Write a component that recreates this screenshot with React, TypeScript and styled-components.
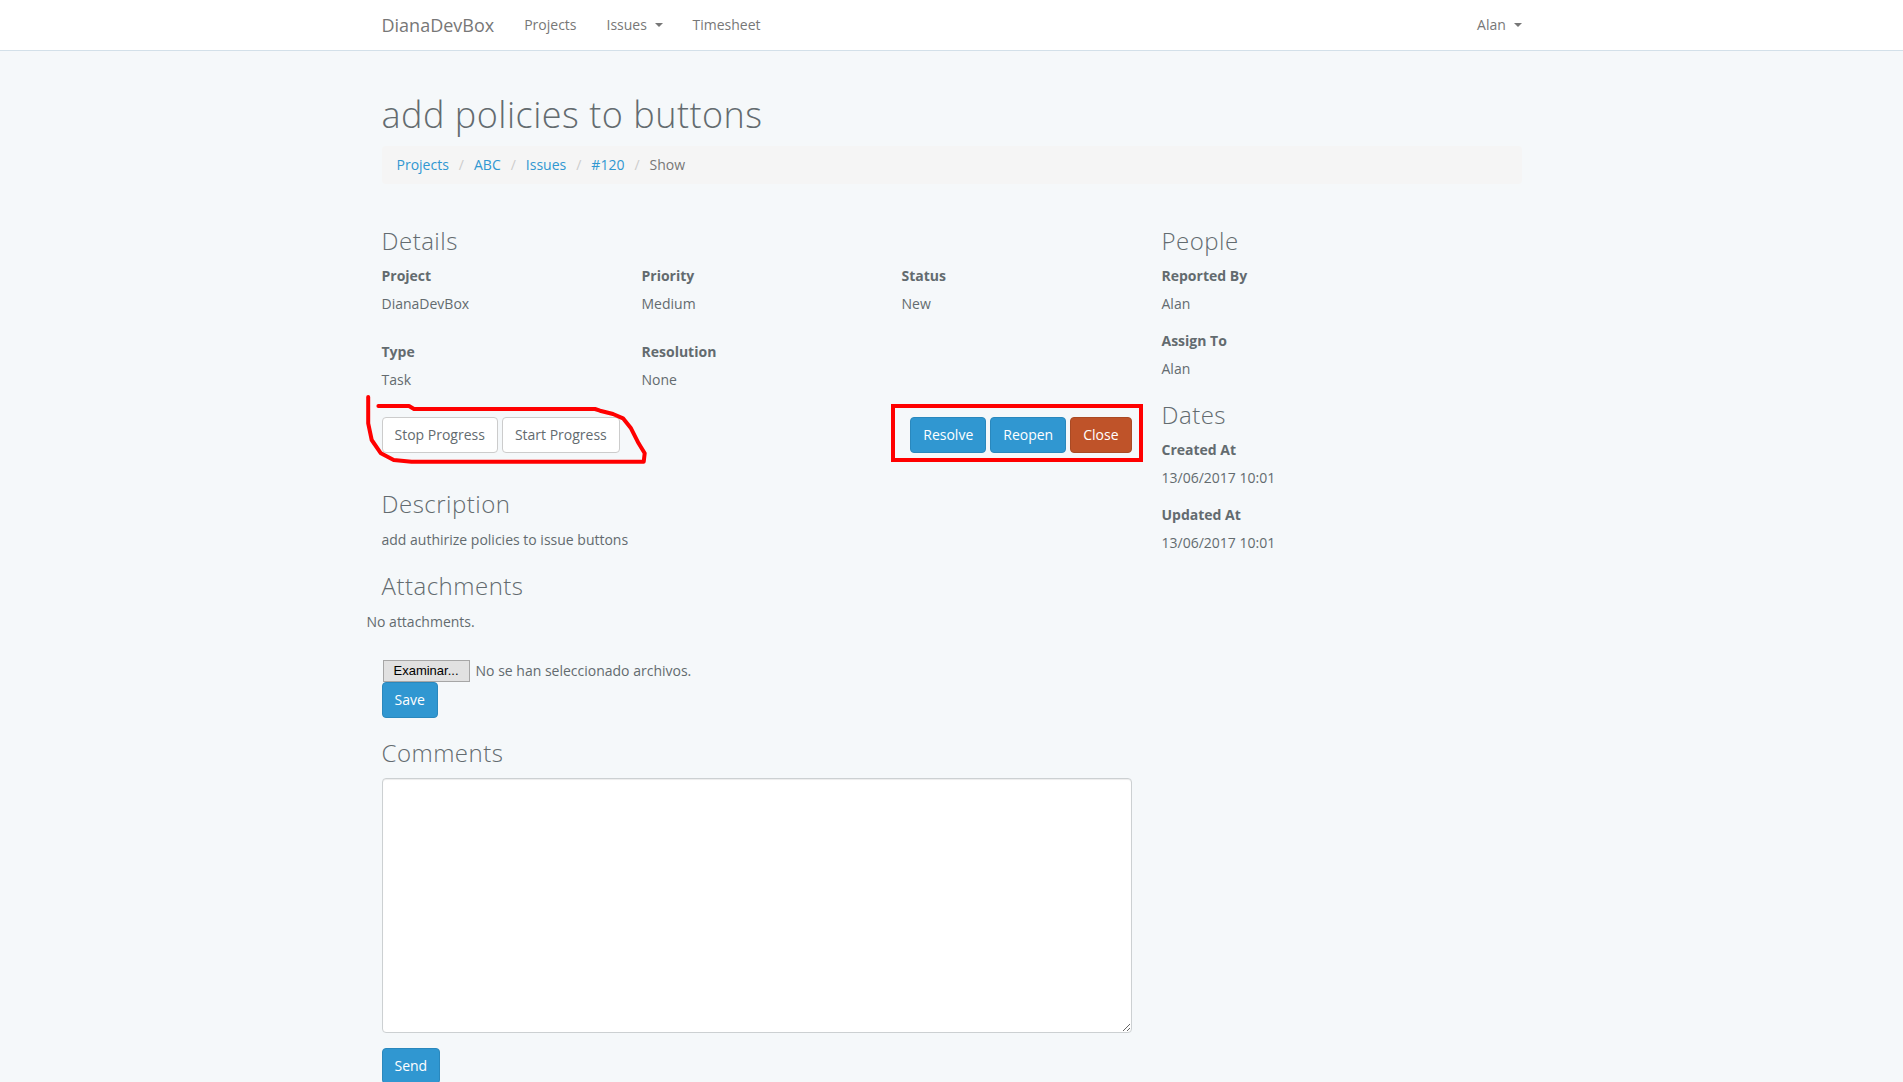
import styled, { createGlobalStyle } from 'styled-components'

const GlobalStyle = createGlobalStyle`
  body {
    margin: 0;
    background-color: #f5f8fa;
    color: #636b6f;
    font-family: 'Open Sans', 'Liberation Sans', sans-serif;
    font-size: 14px;
    line-height: 1.6;
  }
  * {
    box-sizing: border-box;
  }
`

const details = [
  { label: 'Project', value: 'DianaDevBox' },
  { label: 'Priority', value: 'Medium' },
  { label: 'Status', value: 'New' },
  { label: 'Type', value: 'Task' },
  { label: 'Resolution', value: 'None' },
]

const people = [
  { label: 'Reported By', value: 'Alan' },
  { label: 'Assign To', value: 'Alan' },
]

const dates = [
  { label: 'Created At', value: '13/06/2017 10:01' },
  { label: 'Updated At', value: '13/06/2017 10:01' },
]

const crumbs = ['Projects', 'ABC', 'Issues', '#120']

const App = () => {
  return (
    <>
      <GlobalStyle />
      <Navbar>
        <NavInner>
          <Brand>DianaDevBox</Brand>
          <NavLink>Projects</NavLink>
          <NavLink>
            Issues <Caret />
          </NavLink>
          <NavLink>Timesheet</NavLink>
          <NavSpacer />
          <NavLink $last>
            Alan <Caret />
          </NavLink>
        </NavInner>
      </Navbar>

      <Container>
        <Title>add policies to buttons</Title>
        <Breadcrumb>
          {crumbs.map((crumb) => (
            <Crumb key={crumb}>
              <CrumbLink>{crumb}</CrumbLink>
              <CrumbSep>/</CrumbSep>
            </Crumb>
          ))}
          <Crumb>
            <CrumbActive>Show</CrumbActive>
          </Crumb>
        </Breadcrumb>

        <Columns>
          <MainColumn>
            <SectionTitle>Details</SectionTitle>
            <FieldGrid>
              {details.map((item) => (
                <div key={item.label}>
                  <FieldLabel>{item.label}</FieldLabel>
                  <FieldValue $gap={26}>{item.value}</FieldValue>
                </div>
              ))}
            </FieldGrid>

            <Actions>
              <ButtonGroup>
                <Button $variant='default'>Stop Progress</Button>
                <Button $variant='default'>Start Progress</Button>
              </ButtonGroup>
              <ButtonGroup>
                <Button $variant='primary'>Resolve</Button>
                <Button $variant='primary'>Reopen</Button>
                <Button $variant='danger'>Close</Button>
              </ButtonGroup>

              <Scribble width='300' height='80' viewBox='0 0 300 80'>
                <path
                  d='M16.4 14 L47 14 L52 17 L233 17 L238 18.7 L251 22 L261 26.3 L269 36.3 L276.6 51.3 L282.7 61.3 L281.7 69.7 L49.5 69.7 L31.7 68 L18.9 61.3 L9.7 48 L6.2 31.3 L6.2 5'
                  fill='none'
                  stroke='#ff0000'
                  strokeWidth='4'
                  strokeLinecap='round'
                  strokeLinejoin='round'
                />
              </Scribble>
              <RedBox />
            </Actions>

            <SectionTitle>Description</SectionTitle>
            <Paragraph>add authirize policies to issue buttons</Paragraph>

            <SectionTitle>Attachments</SectionTitle>
            <NoAttachments>No attachments.</NoAttachments>

            <FileRow>
              <FileButton>Examinar...</FileButton>
              <FileText>No se han seleccionado archivos.</FileText>
            </FileRow>
            <Button $variant='primary'>Save</Button>

            <SectionTitle>Comments</SectionTitle>
            <CommentBox />
            <Button $variant='primary'>Send</Button>
          </MainColumn>

          <SideColumn>
            <SectionTitle>People</SectionTitle>
            {people.map((item) => (
              <div key={item.label}>
                <FieldLabel>{item.label}</FieldLabel>
                <FieldValue $gap={15}>{item.value}</FieldValue>
              </div>
            ))}
            <SectionTitle>Dates</SectionTitle>
            {dates.map((item) => (
              <div key={item.label}>
                <FieldLabel>{item.label}</FieldLabel>
                <FieldValue $gap={15}>{item.value}</FieldValue>
              </div>
            ))}
          </SideColumn>
        </Columns>
      </Container>
    </>
  )
}

const Navbar = styled.nav`
  background-color: #fff;
  border-bottom: 1px solid #d3e0e9;
  margin-bottom: 22px;
`

const NavInner = styled.div`
  display: flex;
  align-items: center;
  width: 1140px;
  height: 50px;
  margin: 0 auto;
`

const Brand = styled.a`
  font-size: 18px;
  line-height: 20px;
  color: #777;
  padding: 15px 15px 15px 0;
`

const NavLink = styled.a<{ $last?: boolean }>`
  display: flex;
  align-items: center;
  font-size: 14px;
  line-height: 20px;
  color: #777;
  padding: ${({ $last }) => ($last ? '15px 0 15px 15px' : '15px')};
  white-space: pre;
`

const Caret = styled.span`
  display: inline-block;
  width: 0;
  height: 0;
  margin-left: 4px;
  border-top: 4px solid #777;
  border-left: 4px solid transparent;
  border-right: 4px solid transparent;
`

const NavSpacer = styled.div`
  flex: 1;
`

const Container = styled.div`
  display: flow-root;
  width: 1140px;
  margin: 0 auto;
`

const Title = styled.h1`
  font-size: 36px;
  font-weight: 300;
  letter-spacing: 0.5px;
  line-height: 1.1;
  margin: 22px 0 11px;
  color: #636b6f;
`

const Breadcrumb = styled.ol`
  display: flex;
  list-style: none;
  margin: 0 0 22px;
  padding: 8px 15px;
  background-color: #f5f5f5;
  border-radius: 4px;
`

const Crumb = styled.li`
  display: flex;
`

const CrumbLink = styled.a`
  color: #3097d1;
`

const CrumbSep = styled.span`
  color: #ccc;
  padding: 0 10px;
`

const CrumbActive = styled.span`
  color: #777;
`

const Columns = styled.div`
  display: grid;
  grid-template-columns: 750px 360px;
  column-gap: 30px;
`

const MainColumn = styled.div``

const SideColumn = styled.div``

const SectionTitle = styled.h3`
  font-size: 24px;
  font-weight: 300;
  letter-spacing: 0.5px;
  line-height: 1.1;
  margin: 22px 0 11px;
`

const FieldGrid = styled.div`
  display: grid;
  grid-template-columns: repeat(3, 1fr);
  column-gap: 30px;
`

const FieldLabel = styled.label`
  display: block;
  font-weight: 700;
  margin-bottom: 5px;
`

const FieldValue = styled.p<{ $gap: number }>`
  margin: 0 0 ${({ $gap }) => $gap}px;
`

const Actions = styled.div`
  position: relative;
  display: flex;
  justify-content: space-between;
  margin-bottom: 38px;
`

const ButtonGroup = styled.div`
  display: flex;
  gap: 4px;
`

const variants = {
  default: { bg: '#fff', border: '#ccc', color: '#636b6f' },
  primary: { bg: '#3097d1', border: '#2a88bd', color: '#fff' },
  danger: { bg: '#bf5329', border: '#aa4a24', color: '#fff' },
}

const Button = styled.button<{ $variant: keyof typeof variants }>`
  display: block;
  font-family: inherit;
  font-size: 14px;
  line-height: 1.6;
  padding: 6px 12px;
  border-radius: 4px;
  border: 1px solid ${({ $variant }) => variants[$variant].border};
  background-color: ${({ $variant }) => variants[$variant].bg};
  color: ${({ $variant }) => variants[$variant].color};
  cursor: pointer;
`

const Scribble = styled.svg`
  position: absolute;
  left: -20px;
  top: -25px;
  pointer-events: none;
`

const RedBox = styled.div`
  position: absolute;
  left: 509px;
  top: -13px;
  width: 252px;
  height: 58px;
  border: 4px solid #ff0000;
  pointer-events: none;
`

const Paragraph = styled.p`
  margin: 0 0 11px;
`

const NoAttachments = styled.p`
  margin: 0 0 27px -15px;
`

const FileRow = styled.div`
  display: flex;
  align-items: center;
  height: 22px;
`

const FileButton = styled.span`
  display: inline-flex;
  align-items: center;
  height: 22px;
  margin-left: 1px;
  padding: 0 10px;
  font-family: 'Liberation Sans', Arial, sans-serif;
  font-size: 13px;
  color: #000;
  background-color: #e1e1e1;
  border: 1px solid #a6a6a6;
`

const FileText = styled.span`
  margin-left: 6px;
`

const CommentBox = styled.textarea`
  display: block;
  width: 100%;
  height: 255px;
  margin: 0 0 15px;
  padding: 6px 12px;
  font-family: inherit;
  font-size: 14px;
  background-color: #fff;
  border: 1px solid #ccd0d2;
  border-radius: 4px;
  box-shadow: inset 0 1px 1px rgba(0, 0, 0, 0.075);
`

export default App
